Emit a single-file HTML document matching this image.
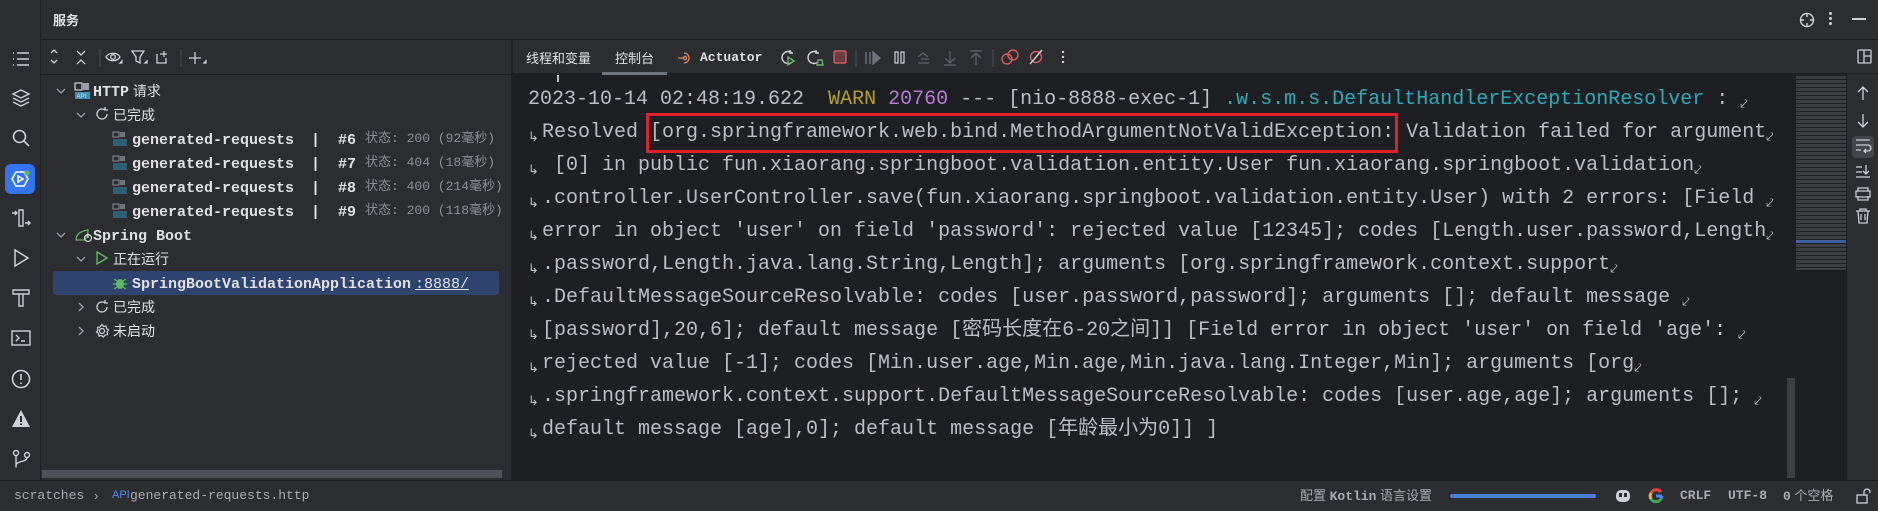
<!DOCTYPE html>
<html><head><meta charset="utf-8">
<style>
*{margin:0;padding:0;box-sizing:border-box}
body{width:1878px;height:510px;overflow:hidden;background:#2b2d30;font-family:"Liberation Sans","Noto Sans CJK SC",sans-serif;color:#dfe1e5;position:relative}
.abs{position:absolute}
.mono{font-family:"Liberation Mono","Noto Sans CJK SC",monospace}
.stripe{left:0;top:0;width:41px;height:480px;background:#2b2d30;border-right:1px solid #1e1f22}
.title{left:41px;top:0;width:1837px;height:40px;border-bottom:1px solid #1e1f22}
.tree{left:41px;top:40px;width:471px;height:440px;background:#2b2d30}
.cons{left:513px;top:40px;width:1334px;height:440px;background:#1e1f22}
.tabs{left:513px;top:40px;width:1365px;height:34px;background:#2b2d30;border-bottom:1px solid #1e1f22}
.row{position:absolute;height:24px;line-height:24px;font-size:14px;white-space:nowrap}
.tx{font-family:"Liberation Mono","Noto Sans CJK SC",monospace;font-weight:bold;font-size:15px;color:#dfe1e5}
.dim{color:#8c8f94;font-weight:normal;font-family:"Liberation Mono","Noto Sans CJK SC",monospace;font-size:13px}
.line{position:absolute;left:528px;height:33px;line-height:33px;font-family:"Liberation Mono","Noto Sans CJK SC",monospace;font-size:20px;color:#bcbec4;white-space:pre}
.w{font-size:13px;color:#bcbec4;display:inline-block;width:14px;vertical-align:-4px}
.status{left:0;top:480px;width:1878px;height:30px;background:#2b2d30;border-top:1px solid #1e1f22;font-size:13px;color:#a8abb0;line-height:29px}
svg{position:absolute}
</style></head><body>
<div class="abs stripe"></div>
<div class="abs title"></div>
<div class="abs" style="left:53px;top:10px;font-size:13px;font-weight:bold;color:#dfe1e5">服务</div>
<svg style="left:1797px;top:10px" width="20" height="20" viewBox="0 0 20 20"><circle cx="10" cy="10" r="6.5" fill="none" stroke="#ced0d6" stroke-width="1.4"/><path d="M10 3v4M10 13v4M3 10h4M13 10h4" stroke="#ced0d6" stroke-width="1.4"/></svg>
<div class="abs" style="left:1829px;top:12px;width:3px;height:3px;background:#ced0d6;border-radius:2px;box-shadow:0 5px #ced0d6,0 10px #ced0d6"></div>
<div class="abs" style="left:1852px;top:18px;width:14px;height:1.5px;background:#ced0d6"></div>

<svg style="left:10px;top:48px" width="22" height="22" viewBox="0 0 22 22" fill="none" stroke="#ced0d6" stroke-width="1.5"><path d="M7 5h12M7 11h12M7 17h12M3 5h1M3 11h1M3 17h1"/></svg>
<svg style="left:10px;top:87px" width="22" height="22" viewBox="0 0 22 22" fill="none" stroke="#ced0d6" stroke-width="1.4"><path d="M11 3l8 4-8 4-8-4z M3 11l8 4 8-4 M3 15l8 4 8-4"/></svg>
<svg style="left:10px;top:127px" width="22" height="22" viewBox="0 0 22 22" fill="none" stroke="#ced0d6" stroke-width="1.6"><circle cx="9.5" cy="9.5" r="6"/><path d="M14 14l5 5"/></svg>
<div class="abs" style="left:5px;top:164px;width:30px;height:30px;background:#3574f0;border-radius:6px"></div>
<svg style="left:8px;top:167px" width="24" height="24" viewBox="0 0 24 24" fill="none" stroke="#fff" stroke-width="1.6"><path d="M8 5h8l4 7-4 7H8l-4-7z"/><path d="M10 9l5 3-5 3z"/><circle cx="19" cy="6" r="2.6" fill="#5fb85f" stroke="none"/></svg>
<svg style="left:10px;top:207px" width="22" height="22" viewBox="0 0 22 22" fill="none" stroke="#ced0d6" stroke-width="1.4"><path d="M9 3h4v16H9z M2 6h5M5 4l2 2-2 2 M15 16h5M18 14l2 2-2 2"/></svg>
<svg style="left:10px;top:247px" width="22" height="22" viewBox="0 0 22 22" fill="none" stroke="#ced0d6" stroke-width="1.5"><path d="M5 3l13 8-13 8z"/></svg>
<svg style="left:10px;top:287px" width="22" height="22" viewBox="0 0 22 22" fill="none" stroke="#ced0d6" stroke-width="1.4"><path d="M3 3h16v4H3z M9 7h4v12H9z"/></svg>
<svg style="left:10px;top:327px" width="22" height="22" viewBox="0 0 22 22" fill="none" stroke="#ced0d6" stroke-width="1.4"><rect x="2" y="4" width="18" height="14"/><path d="M6 8l3 3-3 3M11 14h4"/></svg>
<svg style="left:10px;top:368px" width="22" height="22" viewBox="0 0 22 22" fill="none" stroke="#ced0d6" stroke-width="1.6"><circle cx="11" cy="11" r="8.5"/><path d="M11 6v6M11 14.5v1.5"/></svg>
<svg style="left:10px;top:408px" width="22" height="22" viewBox="0 0 22 22"><path d="M11 2L20 19H2z" fill="#ced0d6"/><path d="M11 8v6M11 15.5v1.5" stroke="#2b2d30" stroke-width="2"/></svg>
<svg style="left:10px;top:448px" width="22" height="22" viewBox="0 0 22 22" fill="none" stroke="#ced0d6" stroke-width="1.4"><circle cx="6" cy="5" r="2.5"/><circle cx="17" cy="7" r="2.5"/><path d="M6 7.5v12M17 9.5c0 5-11 3-11 8"/></svg>

<div class="abs tree"></div>
<div class="abs" style="left:41px;top:74px;width:471px;height:1px;background:#1e1f22"></div>
<svg style="left:44px;top:46px" width="180" height="24" viewBox="0 0 180 24" fill="none" stroke="#ced0d6" stroke-width="1.3">
<path d="M7 7l3-3 3 3M7 14l3 3 3-3"/><path d="M33 5l4 4 4-4M33 18l4-4 4 4"/>
<path d="M56 3v18" stroke="#43454a"/>
<path d="M62 11c3-5 11-5 14 0c-3 5-11 5-14 0z"/><circle cx="69" cy="11" r="2.3"/><path d="M76 17l2-2v2z" fill="#ced0d6"/>
<path d="M88 5h12l-4 6v6l-4-2v-4z"/><path d="M101 17l2-2v2z" fill="#ced0d6"/>
<path d="M113 8v9h9v-5M116 8h3M120 5v6M117 8h6"/>
<path d="M137 3v18" stroke="#43454a"/>
<path d="M145 12h12M151 6v12"/><path d="M160 17l2-2v2z" fill="#ced0d6"/>
</svg>
<div class="abs" style="left:53px;top:271px;width:446px;height:24px;background:#2e436e;border-radius:3px"></div>

<svg style="left:55px;top:79px" width="400" height="264" viewBox="0 0 400 264" fill="none" stroke="#9da0a8" stroke-width="1.3">
<path d="M2 10l4 4 4-4"/><path d="M22 34l4 4 4-4"/><path d="M2 154l4 4 4-4"/><path d="M22 178l4 4 4-4"/><path d="M24 224l4 4-4 4"/><path d="M24 248l4 4-4 4"/>
</svg>
<svg style="left:74px;top:82px" width="20" height="18" viewBox="0 0 20 18"><rect x="1" y="1" width="7" height="7" fill="none" stroke="#ced0d6" stroke-width="1.2"/><rect x="9" y="1" width="6" height="7" fill="#9da0a8"/><rect x="1" y="10" width="15" height="7" fill="#3d8fb5"/><text x="2.5" y="16" font-size="6" fill="#dfe1e5" font-family="Liberation Sans">API</text></svg>
<div class="row" style="left:93px;top:79px"><span class="tx">HTTP</span> <span style="font-size:14px">请求</span></div>
<svg style="left:94px;top:106px" width="16" height="16" viewBox="0 0 16 16" fill="none" stroke="#ced0d6" stroke-width="1.3"><path d="M13 8a5 5 0 1 1-2-4M11 1v3h3"/></svg>
<div class="row" style="left:113px;top:103px">已完成</div>

<div class="row" style="left:132px;top:127px"><span class="tx">generated-requests</span></div>
<div class="row" style="left:132px;top:151px"><span class="tx">generated-requests</span></div>
<div class="row" style="left:132px;top:175px"><span class="tx">generated-requests</span></div>
<div class="row" style="left:132px;top:199px"><span class="tx">generated-requests</span></div>
<div class="row" style="left:311px;top:127px"><span class="tx">|</span></div>
<div class="row" style="left:311px;top:151px"><span class="tx">|</span></div>
<div class="row" style="left:311px;top:175px"><span class="tx">|</span></div>
<div class="row" style="left:311px;top:199px"><span class="tx">|</span></div>
<div class="row" style="left:338px;top:127px"><span class="tx">#6</span></div>
<div class="row" style="left:338px;top:151px"><span class="tx">#7</span></div>
<div class="row" style="left:338px;top:175px"><span class="tx">#8</span></div>
<div class="row" style="left:338px;top:199px"><span class="tx">#9</span></div>
<div class="row dim" style="left:365px;top:127px">状态: 200 (92毫秒)</div>
<div class="row dim" style="left:365px;top:151px">状态: 404 (18毫秒)</div>
<div class="row dim" style="left:365px;top:175px">状态: 400 (214毫秒)</div>
<div class="row dim" style="left:365px;top:199px">状态: 200 (118毫秒)</div>
<svg style="left:112px;top:131px" width="16" height="90" viewBox="0 0 16 90"><g id="a"><rect x="1" y="1" width="6" height="5" fill="none" stroke="#8c8f94"/><rect x="8" y="1" width="5" height="5" fill="#6f737a"/><rect x="1" y="8" width="14" height="7" fill="#2d5f78"/></g><use href="#a" y="24"/><use href="#a" y="48"/><use href="#a" y="72"/></svg>

<svg style="left:74px;top:226px" width="20" height="18" viewBox="0 0 20 18" fill="none" stroke="#5fb85f" stroke-width="1.3"><path d="M2 14c0-6 5-9 12-10c0 4-1 8-4 10z"/><circle cx="14" cy="12" r="3.5" stroke="#ced0d6"/><path d="M14 9v3" stroke="#ced0d6"/></svg>
<div class="row" style="left:93px;top:223px"><span class="tx">Spring Boot</span></div>
<svg style="left:95px;top:251px" width="14" height="14" viewBox="0 0 14 14" fill="none" stroke="#5fb85f" stroke-width="1.4"><path d="M2 1l10 6-10 6z"/></svg>
<div class="row" style="left:113px;top:247px">正在运行</div>
<svg style="left:112px;top:275px" width="16" height="16" viewBox="0 0 16 16" fill="#5fb85f"><ellipse cx="8" cy="9" rx="4" ry="5"/><path d="M1 9h14M2 4l3 2M14 4l-3 2M2 14l3-2M14 14l-3-2" stroke="#5fb85f" stroke-width="1.2"/></svg>
<div class="row" style="left:132px;top:271px"><span class="tx">SpringBootValidationApplication</span> <span class="tx" style="text-decoration:underline;font-weight:normal">:8888/</span></div>
<svg style="left:94px;top:299px" width="16" height="16" viewBox="0 0 16 16" fill="none" stroke="#ced0d6" stroke-width="1.3"><path d="M13 8a5 5 0 1 1-2-4M11 1v3h3"/></svg>
<div class="row" style="left:113px;top:295px">已完成</div>
<svg style="left:94px;top:323px" width="16" height="16" viewBox="0 0 16 16" fill="none" stroke="#ced0d6" stroke-width="1.2"><circle cx="8" cy="8" r="2.5"/><path d="M8 1.5l1.5 2 2.5-.5.5 2.5 2 1.5-1.5 2 .5 2.5-2.5.5-1.5 2-2-1.5-2.5.5-.5-2.5-2-1.5 1.5-2-.5-2.5 2.5-.5z"/></svg>
<div class="row" style="left:113px;top:319px">未启动</div>
<div class="abs" style="left:42px;top:470px;width:460px;height:8px;background:#4e5157"></div>
<div class="abs" style="left:511px;top:40px;width:2px;height:440px;background:#1e1f22"></div>

<div class="abs cons"></div>
<div class="abs tabs"></div>
<div class="abs" style="left:526px;top:48px;font-size:13px;color:#dfe1e5">线程和变量</div>
<div class="abs" style="left:615px;top:48px;font-size:13px;color:#dfe1e5">控制台</div>
<div class="abs" style="left:602px;top:72px;width:65px;height:3px;background:#6f737a"></div>
<svg style="left:677px;top:50px" width="16" height="16" viewBox="0 0 16 16" fill="none" stroke="#e08855" stroke-width="1.3"><path d="M7 3a5 5 0 1 1 0 10M1 8h6"/><circle cx="8" cy="8" r="1.6"/></svg>
<div class="abs mono" style="left:700px;top:50px;font-size:13px;font-weight:bold;color:#dfe1e5">Actuator</div>
<svg style="left:778px;top:46px" width="300" height="24" viewBox="0 0 300 24" fill="none" stroke-width="1.4">
<path d="M14 7a6 6 0 1 0 0 9M12 4v3h3" stroke="#ced0d6"/><path d="M10 11l6 4-6 4z" stroke="#5fb85f"/>
<path d="M40 7a6 6 0 1 0 0 9M38 4v3h3" stroke="#ced0d6"/><path d="M39 19h6l-1-5h-4z" stroke="#5fb85f"/>
<rect x="56" y="5" width="12" height="12" rx="1.5" fill="#db5c5c" stroke="#db5c5c" fill-opacity=".35"/>
<path d="M78 3v18" stroke="#43454a"/>
<path d="M88 6v12M92 6v12M95 6l7 6-7 6z" stroke="#6f737a" fill="#6f737a"/>
<path d="M117 6v11h3V6zM123 6v11h3V6z" stroke="#ced0d6" stroke-width="1.2"/>
<path d="M140 11l5-4 5 4M140 17h11M143 13h8" stroke="#5a5d63"/>
<path d="M172 5v11M167 12l5 5 5-5M166 19h12" stroke="#5a5d63"/>
<path d="M198 19V8M193 12l5-5 5 5M192 5h12" stroke="#5a5d63"/>
<path d="M215 3v18" stroke="#43454a"/>
<circle cx="229" cy="13" r="5" stroke="#db5c5c"/><circle cx="235" cy="9" r="5" stroke="#db5c5c"/>
<circle cx="258" cy="11" r="5.5" stroke="#db5c5c"/><path d="M252 18l12-14" stroke="#ced0d6"/>
<circle cx="285" cy="6" r="1.2" fill="#ced0d6" stroke="none"/><circle cx="285" cy="11" r="1.2" fill="#ced0d6" stroke="none"/><circle cx="285" cy="16" r="1.2" fill="#ced0d6" stroke="none"/>
</svg>
<svg style="left:1856px;top:48px" width="18" height="18" viewBox="0 0 18 18" fill="none" stroke="#ced0d6" stroke-width="1.3"><rect x="2" y="2" width="13" height="13" rx="1"/><path d="M8 2v13M8 8h7"/></svg>
<div class="abs" style="left:557px;top:75px;width:2px;height:7px;background:#bcbec4"></div>

<div class="line" style="top:83px">2023-10-14 02:48:19.622  <span style="color:#b3a12a">WARN</span> <span style="color:#b87ad6">20760</span> --- [nio-8888-exec-1] <span style="color:#2aacb8">.w.s.m.s.DefaultHandlerExceptionResolver</span> : <span class="w">⤦</span></div>
<div class="line" style="top:116px"><span class="w">↳</span>Resolved [org.springframework.web.bind.MethodArgumentNotValidException: Validation failed for argument<span class="w">⤦</span></div>
<div class="line" style="top:149px"><span class="w">↳</span> [0] in public fun.xiaorang.springboot.validation.entity.User fun.xiaorang.springboot.validation<span class="w">⤦</span></div>
<div class="line" style="top:182px"><span class="w">↳</span>.controller.UserController.save(fun.xiaorang.springboot.validation.entity.User) with 2 errors: [Field <span class="w">⤦</span></div>
<div class="line" style="top:215px"><span class="w">↳</span>error in object 'user' on field 'password': rejected value [12345]; codes [Length.user.password,Length<span class="w">⤦</span></div>
<div class="line" style="top:248px"><span class="w">↳</span>.password,Length.java.lang.String,Length]; arguments [org.springframework.context.support<span class="w">⤦</span></div>
<div class="line" style="top:281px"><span class="w">↳</span>.DefaultMessageSourceResolvable: codes [user.password,password]; arguments []; default message <span class="w">⤦</span></div>
<div class="line" style="top:314px"><span class="w">↳</span>[password],20,6]; default message [密码长度在6-20之间]] [Field error in object 'user' on field 'age': <span class="w">⤦</span></div>
<div class="line" style="top:347px"><span class="w">↳</span>rejected value [-1]; codes [Min.user.age,Min.age,Min.java.lang.Integer,Min]; arguments [org<span class="w">⤦</span></div>
<div class="line" style="top:380px"><span class="w">↳</span>.springframework.context.support.DefaultMessageSourceResolvable: codes [user.age,age]; arguments []; <span class="w">⤦</span></div>
<div class="line" style="top:413px"><span class="w">↳</span>default message [age],0]; default message [年龄最小为0]] ]</div>
<div class="abs" style="left:646px;top:113px;width:752px;height:40px;border:3px solid #e0202a"></div>
<div class="abs" style="left:1787px;top:378px;width:8px;height:100px;background:#3d3f43"></div>

<div class="abs" style="left:1796px;top:76px;width:50px;height:194px;background:repeating-linear-gradient(#46484c 0 3px,#1e1f22 3px 4px);opacity:.75"></div>
<div class="abs" style="left:1796px;top:240px;width:50px;height:3px;background:#3d5f9f"></div>
<div class="abs" style="left:1847px;top:75px;width:31px;height:405px;background:#2b2d30"></div>
<div class="abs" style="left:1852px;top:136px;width:22px;height:22px;background:#43454a;border-radius:4px"></div>
<svg style="left:1852px;top:84px" width="22" height="150" viewBox="0 0 22 150" fill="none" stroke="#ced0d6" stroke-width="1.3">
<path d="M11 3v13M6 8l5-5 5 5"/><path d="M11 30v13M6 38l5 5 5-5"/>
<path d="M4 56h14M4 61h12a3 3 0 0 1 0 6h-4M14 65l-2 2 2 2M4 66h5"/>
<path d="M4 83h6M4 88h6M4 93h14M14 81v9M11 87l3 3 3-3"/>
<path d="M6 107v-3h10v3M4 107h14v6H4zM6 112v4h10v-4"/>
<path d="M4 127h14M8 127v-2h6v2M6 127l1 12h8l1-12M9 130v6M13 130v6"/>
</svg>

<div class="abs status">
<span class="abs mono" style="left:14px;top:0;color:#a8abb0">scratches</span>
<span class="abs" style="left:94px;top:0">›</span>
<span class="abs" style="left:112px;top:0;color:#548af7;font-size:11px">API</span>
<span class="abs mono" style="left:130px;top:0;color:#a8abb0">generated-requests.http</span>
<span class="abs" style="left:1300px;top:0">配置 <b class="mono">Kotlin</b> 语言设置</span>
<div class="abs" style="left:1450px;top:13px;width:146px;height:4px;background:#4a7de0;border-radius:2px"></div>
<svg style="left:1614px;top:6px" width="18" height="18" viewBox="0 0 18 18" fill="#ced0d6"><rect x="2" y="3" width="14" height="12" rx="5"/><rect x="5" y="6" width="3" height="4" fill="#2b2d30"/><rect x="10" y="6" width="3" height="4" fill="#2b2d30"/></svg>
<svg style="left:1648px;top:7px" width="16" height="16" viewBox="0 0 16 16" fill="none" stroke-width="3"><path d="M13 4A6 6 0 0 0 3 5" stroke="#ea4335"/><path d="M3 5a6 6 0 0 0 0 6" stroke="#fbbc05"/><path d="M3 11a6 6 0 0 0 10 0" stroke="#34a853"/><path d="M14 8H8" stroke="#4285f4"/><path d="M13 11a6 6 0 0 0 1-3" stroke="#4285f4"/></svg>
<span class="abs mono" style="left:1680px;top:0;font-weight:bold">CRLF</span>
<span class="abs mono" style="left:1728px;top:0;font-weight:bold">UTF-8</span>
<span class="abs" style="left:1783px;top:0"><b class="mono">0</b> 个空格</span>
<svg style="left:1856px;top:7px" width="16" height="16" viewBox="0 0 16 16" fill="none" stroke="#ced0d6" stroke-width="1.3"><rect x="1" y="7" width="10" height="8"/><path d="M8 7V4a3 3 0 0 1 6 0v1"/></svg>
</div>
</body></html>
